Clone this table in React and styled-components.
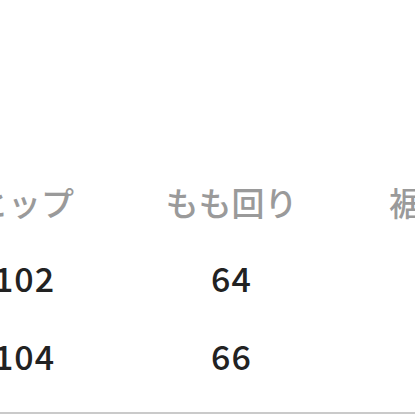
import React from "react";
import styled, { createGlobalStyle } from "styled-components";

const GlobalStyle = createGlobalStyle`
  html, body {
    margin: 0;
    padding: 0;
    background: #fff;
    overflow: hidden;
  }
  body {
    font-family: "Noto Sans CJK JP", "Noto Sans", sans-serif;
  }
`;

const Page = styled.div`
  width: 415px;
  height: 415px;
  overflow: hidden;
  padding-top: 163px;
  box-sizing: border-box;
`;

const Table = styled.div`
  display: grid;
  grid-template-columns: repeat(4, 207px);
  grid-auto-rows: 78px;
  margin-left: -79px;
  width: max-content;
  border-bottom: 2px solid #cacaca;
  padding-bottom: 15px;
`;

const Cell = styled.div`
  display: flex;
  align-items: center;
  justify-content: center;
  white-space: nowrap;
  box-sizing: border-box;
  padding-bottom: ${(p) => (p.$head ? "0" : "6px")};
  font-size: ${(p) => (p.$head ? "33px" : "34px")};
  font-weight: 500;
  color: ${(p) => (p.$head ? "#9a9a9a" : "#222")};
  letter-spacing: ${(p) => (p.$head ? "0" : "1px")};
`;

const heads = ["ヒップ", "もも回り", "裾周り", "股下"];
const rows = [
  ["102", "64", "40", "76"],
  ["104", "66", "42", "77"],
];

export default function App() {
  return (
    <Page>
      <GlobalStyle />
      <Table>
        {heads.map((h) => (
          <Cell key={h} $head>
            {h}
          </Cell>
        ))}
        {rows.map((r, i) =>
          r.map((v, j) => <Cell key={`${i}-${j}`}>{v}</Cell>)
        )}
      </Table>
    </Page>
  );
}
